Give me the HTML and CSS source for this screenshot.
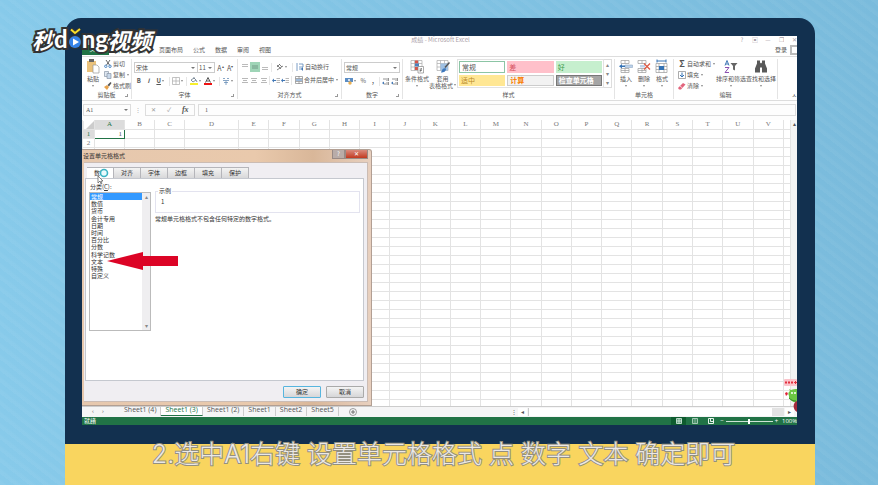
FILE: index.html
```html
<!DOCTYPE html>
<html lang="zh-CN">
<head>
  <meta charset="UTF-8">
  <meta name="viewport" content="width=device-width, initial-scale=1.0">
  <title>设置单元格格式</title>
  <link rel="stylesheet" href="styles.css">
</head>
<body>
  <!-- 아이콘 -->
  <svg class="defs" width="0" height="0">
    <symbol id="i-paste" viewBox="0 0 14 15"><rect x="1" y="2" width="9" height="11" fill="#eac27c"/><rect x="3" y="0" width="5" height="3" fill="#666"/><path d="M7 6h4l2 2v6H7z" fill="#fff" stroke="#999" stroke-width=".7"/></symbol>
    <symbol id="i-cut" viewBox="0 0 8 8"><path d="M2 0l3.500 5M6 0L2.500 5" stroke="#666" fill="none"/><circle cx="1.800" cy="6.300" r="1.200" fill="none" stroke="#4a84c0"/><circle cx="6" cy="6.300" r="1.200" fill="none" stroke="#4a84c0"/></symbol>
    <symbol id="i-copy" viewBox="0 0 8 8"><path d="M.5.5h4v5h-4z" fill="#dde6f0" stroke="#8a97a8" stroke-width=".7"/><path d="M3 2.500h4v5H3z" fill="#c8d8ea" stroke="#8a97a8" stroke-width=".7"/></symbol>
    <symbol id="i-brush" viewBox="0 0 8 8"><path d="M0 5l3-2 2 2-2 3z" fill="#e8a34d"/><path d="M3.500 3l3-3 1 1-2.500 3.500z" fill="#555"/></symbol>
    <symbol id="i-grid" viewBox="0 0 8 8"><path d="M.5.5h7v7h-7zM4 .5v7M.5 4h7" fill="none" stroke="#aaa" stroke-width=".7"/></symbol>
    <symbol id="i-fill" viewBox="0 0 8 8"><path d="M1 3l3-2 2 2-3 2zM4 0v2M6 3l1 2" fill="#fff" stroke="#678" stroke-width=".8"/><rect y="6" width="8" height="2" fill="#f7ef2c"/></symbol>
    <symbol id="i-color" viewBox="0 0 8 8"><path d="M1.500 5.500L4 .5l2.500 5M2.500 4h3" fill="none" stroke="#555"/><rect y="6" width="8" height="2" fill="#e11"/></symbol>
    <symbol id="i-pinyin" viewBox="0 0 8 8"><path d="M1 1.500h2M5 1.500h2M1 3.500h6M2 5.500h4M4 4v4" fill="none" stroke="#6a8fb8" stroke-width=".8"/></symbol>
    <symbol id="i-top" viewBox="0 0 8 8"><path d="M1 1.500h6M1 3.500h6" stroke="#aaa" stroke-width=".8"/></symbol>
    <symbol id="i-mid" viewBox="0 0 8 8"><path d="M1 3h6M1 5h6" stroke="#678e7b" stroke-width=".8"/></symbol>
    <symbol id="i-bot" viewBox="0 0 8 8"><path d="M1 4.500h6M1 6.500h6" stroke="#aaa" stroke-width=".8"/></symbol>
    <symbol id="i-lines" viewBox="0 0 8 8"><path d="M1 2.500h6M2 4.500h4M1 6.500h6" stroke="#999" stroke-width=".7"/></symbol>
    <symbol id="i-orient" viewBox="0 0 8 8"><path d="M1 7l6-4M1 2l4 4M3 1l3 3M1 4l3-3" fill="none" stroke="#666" stroke-width=".8"/></symbol>
    <symbol id="i-indent" viewBox="0 0 8 8"><path d="M4.500 2.500H8M4.500 4.500H8M4.500 6.500H8" stroke="#999" stroke-width=".7"/><path d="M0 4.500l2-2v1.500h2v1H2v1.500z" fill="#3f76b5"/></symbol>
    <symbol id="i-wrap" viewBox="0 0 8 8"><path d="M1 0v8M3 1h4v3H3M3 6h3" fill="none" stroke="#5c87b8" stroke-width=".8"/><path d="M5 6l2-2v4z" fill="#3f76b5"/></symbol>
    <symbol id="i-merge" viewBox="0 0 8 8"><path d="M.5.5h7v7h-7zM.5 2.500h7M.5 5.500h7M4 0v2.500M4 5.500V8" fill="none" stroke="#888" stroke-width=".7"/><path d="M1 4h6" stroke="#3f76b5"/></symbol>
    <symbol id="i-money" viewBox="0 0 8 8"><rect y="1" width="8" height="4" fill="#5b8dc4"/><circle cx="4" cy="3" r="1" fill="#fff"/><circle cx="5" cy="6" r="1.700" fill="#e9ae52"/></symbol>
    <symbol id="i-dec" viewBox="0 0 8 8"><path d="M1 2h3M5 1v3M6.500 1v3M2 7h2M5 5v3M6.500 5v3" stroke="#777" stroke-width=".8"/><path d="M0 6l2-1.500v3z" fill="#3f76b5"/></symbol>
    <symbol id="i-cond" viewBox="0 0 14 14"><path d="M1 1h11v10H1zM4.500 1v10M8.500 1v10M1 4h11M1 7.500h11" fill="#fff" stroke="#aaa" stroke-width=".7"/><path d="M5 1h3v3H5z" fill="#d65348"/><path d="M5 4h4v3H5z" fill="#4a80bd"/><path d="M5 7.500h3v3H5z" fill="#d65348"/><path d="M8 7h5.500v6.500H8z" fill="#fff" stroke="#888" stroke-width=".7"/><path d="M9.500 9.500h2.500M9.500 11h2.500M11.500 8.500l-1.500 4" stroke="#555" stroke-width=".6"/></symbol>
    <symbol id="i-table" viewBox="0 0 14 14"><path d="M1 1h11v10H1zM4.500 1v10M8.500 1v10M1 4h11M1 7.500h11" fill="#fff" stroke="#aaa" stroke-width=".7"/><path d="M4.500 4h7.500v7H4.500z" fill="#9fc0e2"/><path d="M13.500 3L9 8" stroke="#555" stroke-width="1.500"/><path d="M5 13c1-4 3-5 5-4 0 3-2 4-5 4z" fill="#3d78bc"/></symbol>
    <symbol id="i-insert" viewBox="0 0 14 14"><path d="M2 1h8v3H2zM6 1v3M2 9h8v4H2zM6 9v4M2 11h8" fill="#fff" stroke="#999" stroke-width=".7"/><path d="M6 5.500h7.500v2.500H6z" fill="#bcd2ea" stroke="#8fa8c4" stroke-width=".6"/><path d="M0 6.800l3-2.300v1.600h3v1.400H3V9z" fill="#3472b4"/></symbol>
    <symbol id="i-delete" viewBox="0 0 14 14"><path d="M1 1h8v3H1zM5 1v3M1 9h8v4H1zM5 9v4M1 11h8" fill="#fff" stroke="#999" stroke-width=".7"/><path d="M3 5.500h5v2.500H3z" fill="#bcd2ea"/><path d="M7 4l6 6M13 4l-6 6" stroke="#dd5a44" stroke-width="1.300"/></symbol>
    <symbol id="i-format" viewBox="0 0 14 14"><path d="M2 1.500h9M2 0v3M11 0v3" stroke="#3472b4"/><path d="M1 4h11v9H1zM4 4v9M9 4v9M1 7h11M1 10h11" fill="#fff" stroke="#999" stroke-width=".7"/><path d="M4 6.500h5v4H4z" fill="#3472b4"/></symbol>
    <symbol id="i-down" viewBox="0 0 8 8"><path d="M.5.5h7v7h-7z" fill="#fff" stroke="#888" stroke-width=".7"/><path d="M4 1.500v4M2 4l2 2 2-2" fill="none" stroke="#3472b4"/></symbol>
    <symbol id="i-erase" viewBox="0 0 8 8"><path d="M0 6l5-5 2.500 1.500L3 7.500H1z" fill="#e2647c"/><path d="M2 4l2.500 2" stroke="#fff" stroke-width=".7"/></symbol>
    <symbol id="i-filter" viewBox="0 0 14 14"><path d="M1 6l2-5 2 5M1.700 4.500h2.600" fill="none" stroke="#3f76b5"/><path d="M1 8h4l-4 5h4" fill="none" stroke="#8a4fb0"/><path d="M6.500 3.500h7L11 6.500V11l-2-1V6.500z" fill="#666"/></symbol>
    <symbol id="i-find" viewBox="0 0 14 14"><path d="M3 1h3v2l1 1 1-1V1h3v3l2 5v4H8V8H6v5H1V9l2-5z" fill="#595959"/></symbol>
  </svg>

  <main class="stage">
    <div class="monitor">
      <div class="excel">
        <header class="titlebar">
          <span class="doc-title">成绩 - Microsoft Excel</span>
          <div class="win-btns">
            <span>?</span><span>▣</span><span>—</span><span>❐</span><span>✕</span>
          </div>
        </header>

        <nav class="menu">
          <a href="#" class="file">文件</a>
          <a href="#" class="on">开始</a>
          <a href="#">插入</a>
          <a href="#">页面布局</a>
          <a href="#">公式</a>
          <a href="#">数据</a>
          <a href="#">审阅</a>
          <a href="#">视图</a>
          <a href="#" class="login">登录</a>
          <span class="avatar"></span>
        </nav>

        <div class="ribbon">
          <section class="group">
            <div class="group-body">
              <button class="big"><svg><use href="#i-paste"/></svg>粘贴<i class="caret"></i></button>
              <div class="stack">
                <button><svg><use href="#i-cut"/></svg>剪切</button>
                <button><svg><use href="#i-copy"/></svg>复制<i class="caret"></i></button>
                <button><svg><use href="#i-brush"/></svg>格式刷</button>
              </div>
            </div>
            <footer>剪贴板<i class="corner"></i></footer>
          </section>

          <section class="group">
            <div class="group-body rows">
              <div class="row">
                <select class="font-name" aria-label="字体"><option>宋体</option></select>
                <select class="font-size" aria-label="字号"><option>11</option></select>
                <button class="tool letter">A<sup>▴</sup></button>
                <button class="tool letter">A<sup>▾</sup></button>
              </div>
              <div class="row">
                <button class="tool"><b>B</b></button>
                <button class="tool"><b><em>I</em></b></button>
                <button class="tool wide"><b><u>U</u></b><i class="caret"></i></button>
                <i class="sep"></i>
                <button class="tool wide"><svg><use href="#i-grid"/></svg><i class="caret"></i></button>
                <i class="sep"></i>
                <button class="tool wide"><svg><use href="#i-fill"/></svg><i class="caret"></i></button>
                <button class="tool wide"><svg><use href="#i-color"/></svg><i class="caret"></i></button>
                <i class="sep"></i>
                <button class="tool wide"><svg><use href="#i-pinyin"/></svg><i class="caret"></i></button>
              </div>
            </div>
            <footer>字体<i class="corner"></i></footer>
          </section>

          <section class="group">
            <div class="group-body rows">
              <div class="row">
                <button class="tool"><svg><use href="#i-top"/></svg></button>
                <button class="tool pressed"><svg><use href="#i-mid"/></svg></button>
                <button class="tool"><svg><use href="#i-bot"/></svg></button>
                <i class="sep"></i>
                <button class="tool orient"><svg><use href="#i-orient"/></svg><i class="caret"></i></button>
                <i class="sep"></i>
                <button class="tool text"><svg><use href="#i-wrap"/></svg>自动换行</button>
              </div>
              <div class="row">
                <button class="tool"><svg><use href="#i-lines"/></svg></button>
                <button class="tool"><svg><use href="#i-lines"/></svg></button>
                <button class="tool"><svg><use href="#i-lines"/></svg></button>
                <i class="sep"></i>
                <button class="tool"><svg><use href="#i-indent"/></svg></button>
                <button class="tool"><svg><use href="#i-indent"/></svg></button>
                <i class="sep"></i>
                <button class="tool text"><svg><use href="#i-merge"/></svg>合并后居中<i class="caret"></i></button>
              </div>
            </div>
            <footer>对齐方式<i class="corner"></i></footer>
          </section>

          <section class="group">
            <div class="group-body rows">
              <div class="row">
                <select class="num-format" aria-label="数字格式"><option>常规</option></select>
              </div>
              <div class="row">
                <button class="tool wide"><svg><use href="#i-money"/></svg><i class="caret"></i></button>
                <button class="tool">%</button>
                <button class="tool"><b>,</b></button>
                <i class="sep"></i>
                <button class="tool"><svg><use href="#i-dec"/></svg></button>
                <button class="tool"><svg><use href="#i-dec"/></svg></button>
              </div>
            </div>
            <footer>数字<i class="corner"></i></footer>
          </section>

          <section class="group">
            <div class="group-body">
              <button class="big"><svg><use href="#i-cond"/></svg>条件格式<i class="caret"></i></button>
              <button class="big"><svg><use href="#i-table"/></svg>套用<span>表格格式<i class="caret"></i></span></button>
              <div class="gallery">
                <button class="s-normal">常规</button>
                <button class="s-bad">差</button>
                <button class="s-good">好</button>
                <button class="s-mid">适中</button>
                <button class="s-calc">计算</button>
                <button class="s-check">检查单元格</button>
              </div>
              <div class="gallery-nav"><span>▴</span><span>▾</span><span>▾</span></div>
            </div>
            <footer>样式</footer>
          </section>

          <section class="group">
            <div class="group-body even">
              <button class="big"><svg><use href="#i-insert"/></svg>插入<i class="caret"></i></button>
              <button class="big"><svg><use href="#i-delete"/></svg>删除<i class="caret"></i></button>
              <button class="big"><svg><use href="#i-format"/></svg>格式<i class="caret"></i></button>
            </div>
            <footer>单元格</footer>
          </section>

          <section class="group">
            <div class="group-body">
              <div class="stack edit">
                <button><b class="sigma">Σ</b>自动求和<i class="caret"></i></button>
                <button><svg><use href="#i-down"/></svg>填充<i class="caret"></i></button>
                <button><svg><use href="#i-erase"/></svg>清除<i class="caret"></i></button>
              </div>
              <button class="big"><svg><use href="#i-filter"/></svg>排序和筛选<i class="caret"></i></button>
              <button class="big"><svg><use href="#i-find"/></svg>查找和选择<i class="caret"></i></button>
            </div>
            <footer>编辑</footer>
          </section>
          <div class="collapse">ㅅ</div>
        </div>

        <div class="formula">
          <select class="name-box" aria-label="名称框"><option>A1</option></select>
          <span class="dots">⋮</span>
          <div class="fx"><span>✕</span><span>✓</span><em>fx</em></div>
          <input type="text" value="1" aria-label="编辑栏">
        </div>

        <div class="sheet">
          <table id="grid">
            <colgroup>
              <col class="c-head"><col class="c-a"><col class="c-a"><col class="c-a"><col class="c-d">
              <col span="18"><col class="c-last">
            </colgroup>
          </table>
          <div class="vscroll"><span>▴</span></div>
        </div>

        <div class="sheet-tabs">
          <span class="arrows">‹</span><span class="arrows">›</span>
          <a href="#">Sheet1 (4)</a>
          <a href="#" class="on">Sheet1 (3)</a>
          <a href="#">Sheet1 (2)</a>
          <a href="#">Sheet1</a>
          <a href="#">Sheet2</a>
          <a href="#">Sheet5</a>
          <button class="add" aria-label="新工作表"><svg viewBox="0 0 8 8"><circle cx="4" cy="4" r="3.500" fill="none" stroke="#777" stroke-width=".7"/><path d="M4 2v4M2 4h4" stroke="#555" stroke-width=".8"/></svg></button>
          <div class="hscroll"><span>⋮</span><span class="end">◂</span><i></i><span class="end">▸</span></div>
        </div>

        <div class="status">
          <span>就绪</span>
          <div class="views">
            <svg class="sel" viewBox="0 0 14 8"><path d="M5 1.500h5v5H5zM7.500 1.500v5M5 4h5" fill="#5b9a78" stroke="#dbeee3" stroke-width=".8"/></svg>
            <svg viewBox="0 0 14 8"><path d="M5 1.500h5v5H5zM6 3h3M6 5h3" fill="none" stroke="#c5dfd0" stroke-width=".8"/></svg>
            <svg viewBox="0 0 14 8"><path d="M5 1.500h5v5H5zM7 1.500v3h3" fill="none" stroke="#fff" stroke-width=".9"/></svg>
          </div>
          <span>−</span>
          <input type="range" min="10" max="190" value="100" aria-label="缩放">
          <span>+</span>
          <span class="pct">100%</span>
        </div>

        <!-- 셀 서식 창 -->
        <div class="dialog">
          <div class="dlg-title">
            <span>设置单元格格式</span>
            <button class="help">?</button><button class="close">✕</button>
          </div>
          <div class="dlg-body">
            <div class="dlg-tabs">
              <button class="on">数字</button><button>对齐</button><button>字体</button><button>边框</button><button>填充</button><button>保护</button>
            </div>
            <div class="panel">
              <div class="kinds">
                <label for="kind">分类(<u>C</u>):</label>
                <div class="listbox">
                  <select id="kind" size="12">
                    <option selected>常规</option>
                    <option>数值</option>
                    <option>货币</option>
                    <option>会计专用</option>
                    <option>日期</option>
                    <option>时间</option>
                    <option>百分比</option>
                    <option>分数</option>
                    <option>科学记数</option>
                    <option>文本</option>
                    <option>特殊</option>
                    <option>自定义</option>
                  </select>
                  <div class="bar"><span>▴</span><span>▾</span></div>
                </div>
              </div>
              <div class="detail">
                <fieldset><legend>示例</legend>1</fieldset>
                <p>常规单元格格式不包含任何特定的数字格式。</p>
              </div>
            </div>
            <div class="dlg-btns">
              <button class="ok">确定</button>
              <button>取消</button>
            </div>
          </div>
          <svg class="cursor" viewBox="0 0 14 17"><circle cx="9" cy="5" r="3.500" fill="#e9fbfd" stroke="#3bb4c4" stroke-width="1.600"/><path d="M3 8v7l2-2 1 3 1-.5-1-2.500h2z" fill="#fff" stroke="#555" stroke-width=".7"/></svg>
          <svg class="arrow" viewBox="0 0 71 18"><path d="M0 9L36 0v4h35v10H36v4z" fill="#dc0426"/></svg>
        </div>

        <svg class="mascot" viewBox="0 0 13 36"><rect x="0" y="1" width="13" height="7" rx="1" fill="#fbc4cb"/><path d="M1 4.500h2M4 4.500h2M7 4.500h2M10 4.500h3M2 3v3M5 3v3M8 3v3M11.500 3v3" stroke="#e0303f"/><path d="M5 18c-1-2-1-4 1-5l-1-2 2 1c2-1 4-1 6-1v13c-3 1-6-1-8-4z" fill="#6cc644"/><path d="M1 15l2-1 1 2-2 2z" fill="#e0233a"/><circle cx="8" cy="15" r="1" fill="#fff"/><circle cx="11" cy="15" r="1" fill="#fff"/><path d="M5 20c2 2 4 3 7 3" stroke="#388e2a" fill="none"/><path d="M13 23c-4 1-5 8 0 11z" fill="#a32a3c"/></svg>
      </div>
    </div>
    <p class="caption">2.选中A1右键 设置单元格格式 点 数字 文本 确定即可</p>
  </main>

  <div class="logo">
    <span class="cn">秒</span><span class="en">d</span><svg viewBox="0 0 14 24"><path d="M3 2l4 4 5-4" fill="none" stroke="#333" stroke-width="4"/><circle cx="7" cy="15" r="7" fill="#333"/><path d="M3 2.500l4 3.500 5-4" fill="none" stroke="#f9df2c" stroke-width="2"/><circle cx="7" cy="15" r="6" fill="#3583e8"/><path d="M5 11.500v7l6-3.500z" fill="#fff"/></svg><span class="en">ng</span><span class="cn">视频</span>
  </div>

  <script>
    const grid = document.querySelector("#grid");
    const cols = "ABCDEFGHIJKLMNOPQRSTUV";
    let html = "<thead><tr><th class='all'></th>";
    for(const c of cols){
      html += "<th>" + c + "</th>";
    }
    html += "<th></th></tr></thead><tbody>";
    for(let r = 1; r <= 31; r++){
      html += "<tr><th>" + r + "</th>" + "<td></td>".repeat(cols.length + 1) + "</tr>";
    }
    grid.insertAdjacentHTML("beforeend", html + "</tbody>");
    // A1 선택
    const a1 = grid.querySelector("tbody td");
    a1.textContent = "1";
    a1.className = "active";
    grid.querySelectorAll("thead th")[1].className = "sel";
    grid.querySelector("tbody th").className = "sel";
  </script>
</body>
</html>
```
FILE: styles.css
```css
*{
  box-sizing: border-box;
}
body{
  margin: 0;
  min-height: 100vh;
  font-family: "Noto Sans CJK SC", sans-serif;
  font-size: 6px;
  line-height: 8px;
  color: #555;
  background: repeating-linear-gradient(38deg, rgba(255,255,255,.04) 0 3px, transparent 5px 9px),
  linear-gradient(90deg, #87caea, #7abbdc);
  overflow: hidden;
}
a{
  color: inherit;
  text-decoration: none;
}
button, select, input{
  font: inherit;
  color: inherit;
  margin: 0;
  padding: 0;
  border: 0;
  border-radius: 0;
  background: none;
}
select{
  appearance: none;
}
.defs{
  position: absolute;
}
.stage{
  display: flex;
  flex-direction: column;
  min-height: 100vh;
  padding: 18px 63px 0 65px;
}
.monitor{
  padding: 18px 18px 19px 17px;
  background: #12304f;
  border-radius: 16px 16px 0 0;
}
.excel{
  position: relative;
  background: #fff;
  overflow: hidden;
}

/* 제목, 메뉴 */
.titlebar{
  display: flex;
  justify-content: flex-end;
  color: #aaa0a8;
}
.doc-title{
  flex: 1;
  text-align: center;
  padding-left: 60px;
}
.win-btns{
  display: flex;
  gap: 7px;
}
.win-btns span{
  width: 6px;
  text-align: center;
  overflow: hidden;
}
.menu{
  display: flex;
  align-items: center;
  gap: 10px;
  height: 12px;
}
.menu .file{
  width: 27px;
  height: 10px;
  margin-right: -4px;
  text-align: center;
  color: #fff;
  background: #217346;
}
.menu .on{
  color: #217346;
}
.menu .login{
  margin-left: auto;
}
.avatar{
  width: 7px;
  height: 10px;
  margin-left: -7px;
  border: 2px solid #bbb;
  border-right: 0;
}

/* 리본 */
.ribbon{
  display: grid;
  grid-template-columns: 50fr 106fr 104fr 61fr 212fr 59fr 104fr 19fr;
  padding: 2px 0 1px;
  border-top: 1px solid #ddd;
  border-bottom: 1px solid #ddd;
}
.group{
  display: flex;
  flex-direction: column;
  min-width: 0;
  border-right: 1px solid #e4e4e4;
}
.group-body{
  display: flex;
  height: 32px;
  padding: 0 2px;
}
.group footer{
  display: flex;
  justify-content: center;
  position: relative;
}
.corner{
  position: absolute;
  right: 3px;
  bottom: 2px;
  width: 3px;
  height: 3px;
  border: solid #999;
  border-width: 0 1px 1px 0;
}
.caret{
  display: inline-block;
  flex: none;
  margin: 0 1px;
  border: solid transparent;
  border-width: 2px 1px 0;
  border-top-color: #888;
}
button{
  white-space: nowrap;
}
.ribbon button{
  display: flex;
  align-items: center;
  justify-content: center;
}
.ribbon .big{
  flex: none;
  flex-direction: column;
  justify-content: flex-start;
  min-width: 18px;
  line-height: 7px;
}
.big svg{
  width: 14px;
  height: 15px;
  margin-bottom: 1px;
}
.big .caret{
  margin-top: 3px;
}
.big span .caret{
  margin: 2px 0 2px 1px;
}
.stack{
  display: flex;
  flex-direction: column;
  justify-content: space-between;
  margin-left: 2px;
}
.stack button{
  gap: 1px;
  justify-content: flex-start;
  line-height: 10px;
}
.stack svg, .tool svg{
  flex: none;
  width: 8px;
  height: 8px;
}
.stack.edit{
  width: 38px;
}
.sigma{
  width: 8px;
  font-size: 9px;
}
.rows{
  flex-direction: column;
  gap: 3px;
  padding-top: 3px;
}
.row{
  display: flex;
  align-items: center;
}
.row select, .name-box{
  height: 11px;
  padding-left: 1px;
  border: 1px solid #ccc;
  background: url("data:image/svg+xml,%3Csvg xmlns='http://www.w3.org/2000/svg' width='4' height='2'%3E%3Cpath d='M0 0h4L2 2z' fill='%23777'/%3E%3C/svg%3E") no-repeat right 2px center;
}
.row .font-name{
  width: 66px;
}
.row .font-size{
  width: 17px;
  border-left: 0;
  margin-right: 1px;
}
.row .num-format{
  flex: 1;
}
.tool{
  width: 10px;
  height: 10px;
}
.tool.wide{
  width: 15px;
}
.tool.orient{
  width: 18px;
}
.tool.text{
  width: auto;
  margin-left: 2px;
  gap: 1px;
}
.tool.letter{
  font-size: 7px;
}
.tool sup{
  align-self: flex-start;
  font-size: 4px;
  line-height: 6px;
}
.tool.pressed{
  background: #9fd5b7;
}
.sep{
  width: 1px;
  height: 9px;
  margin: 0 1px;
  background: #e6e6e6;
}
.gallery{
  flex: 1;
  display: grid;
  grid-template-columns: repeat(3, 1fr);
  gap: 2px;
  margin-left: 1px;
  padding: 1px;
  border: 1px solid #e2e2e2;
  height: 29px;
}
.gallery button{
  justify-content: flex-start;
  padding-left: 2px;
  font-size: 7px;
  min-width: 0;
}
.gallery .s-normal{
  border: 1px solid #8cc5a5;
}
.gallery .s-bad{
  color: #d5505f;
  background: #ffc0ca;
}
.gallery .s-good{
  color: #3c9a4c;
  background: #c6efce;
}
.gallery .s-mid{
  color: #b98a2a;
  background: #ffe794;
}
.gallery .s-calc{
  color: #fa7d00;
  font-weight: bold;
  background: #f2f2f2;
  border: 1px solid #ccc;
}
.gallery .s-check{
  color: #fff;
  font-weight: bold;
  background: #a5a5a5;
  border: 1px solid #777;
}
.gallery-nav{
  display: flex;
  flex-direction: column;
  justify-content: space-around;
  width: 8px;
  height: 29px;
  text-align: center;
  color: #888;
  border: 1px solid #ddd;
  border-left: 0;
}
.even{
  justify-content: space-around;
}
.collapse{
  align-self: end;
  text-align: right;
}

/* 수식 입력줄 */
.formula{
  display: flex;
  align-items: stretch;
  height: 19px;
  padding: 3px 1px 4px;
  font-family: "Liberation Serif", "Noto Sans CJK SC", serif;
  background: #fdfdfd;
}
.name-box{
  width: 48px;
  height: auto;
  padding-left: 2px;
  border-color: #ddd;
}
.dots{
  width: 14px;
  text-align: center;
  line-height: 12px;
  color: #aaa;
}
.fx{
  display: flex;
  justify-content: space-around;
  align-items: center;
  width: 50px;
  margin-right: 3px;
  color: #999;
  border: 1px solid #ddd;
}
.fx em{
  font-size: 8px;
  font-weight: bold;
  color: #555;
}
.formula input{
  flex: 1;
  min-width: 0;
  padding-left: 6px;
  border: 1px solid #ddd;
}

/* 시트 */
.sheet{
  display: flex;
  height: 286px;
  overflow: hidden;
}
#grid{
  flex: 1;
  table-layout: fixed;
  width: 0;
  border-collapse: collapse;
  font-family: "Liberation Serif", serif;
}
.c-head{
  width: 12px;
}
.c-a{
  width: 30px;
}
.c-d{
  width: 54px;
}
.c-last{
  width: 7px;
}
#grid th, #grid td{
  height: 9px;
  padding: 0;
  font-size: 7px;
  line-height: 8px;
  font-weight: normal;
  border: 1px solid #e3e3e3;
}
#grid th{
  color: #777;
  border-top: 0;
}
#grid td{
  text-align: right;
}
#grid th.all{
  background: linear-gradient(135deg, transparent 60%, #ccc 60%);
}
#grid th.sel{
  color: #217346;
  background: #dcdcdc;
}
#grid td.active{
  padding-right: 2px;
  border: 1px solid #217346;
}
.vscroll{
  width: 6px;
  text-align: center;
  background: #f3f3f3;
}
.sheet-tabs{
  display: flex;
  align-items: flex-start;
  height: 11px;
  font-family: "Open Sans", sans-serif;
  background: #f5f5f6;
  border-top: 1px solid #ccc;
}
.arrows{
  width: 10px;
  text-align: center;
}
.arrows:first-child{
  margin-left: 6px;
}
.arrows + a{
  margin-left: 12px;
}
.sheet-tabs a{
  height: 9px;
  padding: 0 4px;
  font-size: 7px;
  line-height: 6px;
  border-right: 1px solid #ccc;
}
.sheet-tabs .on{
  color: #217346;
  background: #fff;
  border-bottom: 1px solid #217346;
}
.add{
  display: flex;
  margin-left: 10px;
  padding-top: 1px;
}
.add svg{
  width: 8px;
  height: 8px;
}
.hscroll{
  display: flex;
  width: 285px;
  margin-left: auto;
  margin-right: 3px;
  padding-top: 1px;
}
.hscroll span{
  width: 9px;
  text-align: center;
}
.hscroll .end{
  background: #fff;
}
.hscroll i{
  flex: 1;
  margin: 0 1px;
  background: #fff;
  border: solid #ccc;
  border-width: 0 12px 0 1px;
  border-right-color: #e3e3e3;
}
.status{
  display: flex;
  align-items: center;
  height: 8px;
  padding-left: 2px;
  color: #fff;
  background: #217346;
}
.views{
  display: flex;
  gap: 1px;
  margin-left: auto;
  margin-right: 2px;
}
.views svg{
  width: 15px;
  height: 8px;
}
.views .sel{
  background: #0e5c2f;
}
.status input{
  appearance: none;
  width: 47px;
  height: 1px;
  margin: 0 2px;
  background: #cfe3d7;
}
.status input::-webkit-slider-thumb{
  appearance: none;
  width: 2px;
  height: 5px;
  background: #fff;
}
.pct{
  width: 15px;
  margin-left: 4px;
  font-family: "Open Sans", sans-serif;
}

/* 셀 서식 창 */
.dialog{
  position: absolute;
  left: 0;
  top: 113px;
  width: 290px;
  padding: 0 3px 3px 2px;
  color: #333;
  background: linear-gradient(90deg, #e6c8ae, #e9c9ac 60%, #d9b799 80%, #e8d0bf);
  border: 1px solid #b29f93;
  border-left: 0;
  border-radius: 0 3px 0 0;
}
.dlg-title{
  display: flex;
  height: 12px;
  margin-left: -1px;
}
.dlg-title span{
  flex: 1;
  padding-top: 2px;
}
.dlg-title button{
  width: 13px;
  height: 9px;
  line-height: 8px;
  color: #fff;
  background: #b9aca8;
  border: 1px solid #998a85;
  border-top: 0;
}
.dlg-title .close{
  width: 23px;
  background: linear-gradient(#d98a7c, #c23a20);
}
.dlg-body{
  padding: 4px 3px 3px 1px;
  background: #f0eef2;
  border: 1px solid #cbbcb4;
  border-left: 0;
}
.dlg-tabs{
  display: flex;
  padding-left: 2px;
}
.dlg-tabs button{
  width: 27px;
  height: 11px;
  border: 1px solid #b5b5ba;
  border-left-width: 0;
  border-bottom: 0;
  background: linear-gradient(#f3f3f3, #d8d8da);
}
.dlg-tabs .on{
  background: #fff;
}
.panel{
  display: flex;
  gap: 4px;
  height: 203px;
  padding: 3px 3px 0;
  background: #fff;
  border: 1px solid #c5c8cf;
}
.kinds{
  width: 62px;
}
.kinds label{
  display: block;
  padding: 0 1px;
  line-height: 10px;
}
.listbox{
  display: flex;
  height: 139px;
  border: 1px solid #bbb;
}
.listbox select{
  flex: 1;
  height: 100%;
  min-width: 0;
  overflow: hidden;
  outline: 0;
}
.listbox option{
  display: flex;
  align-items: center;
  height: 1.2em;
  min-height: 0;
  padding: 0 1px;
}
.listbox option:checked{
  color: #fff;
  background: #3399ff linear-gradient(#3399ff, #3399ff);
}
.bar{
  display: flex;
  flex-direction: column;
  justify-content: space-between;
  width: 8px;
  text-align: center;
  color: #888;
  background: #efeef0;
}
.detail{
  flex: 1;
}
fieldset{
  margin: 5px 0 0;
  padding: 3px 5px 6px;
  border: 1px solid #e3e3ef;
}
legend{
  margin-left: -3px;
  padding: 0 1px;
}
.detail p{
  margin: 2px 0;
}
.dlg-btns{
  display: flex;
  justify-content: flex-end;
  gap: 5px;
  padding-top: 5px;
}
.dlg-btns button{
  width: 38px;
  height: 12px;
  background: linear-gradient(#f4f4f4, #d6d6d8);
  border: 1px solid #aaa;
  border-radius: 1px;
}
.dlg-btns .ok{
  border-color: #57b5de;
}
.cursor{
  position: absolute;
  left: 13px;
  top: 18px;
  width: 14px;
  height: 17px;
}
.arrow{
  position: absolute;
  left: 25px;
  top: 102px;
  width: 71px;
  height: 18px;
}
.mascot{
  position: absolute;
  right: 0;
  bottom: 11px;
  width: 13px;
  height: 36px;
}

/* 자막, 로고 */
.caption{
  flex: 1;
  margin: 0;
  padding-left: 7px;
  font-family: Inter, "Noto Sans CJK SC", sans-serif;
  font-size: 25px;
  font-weight: 300;
  line-height: 20px;
  text-align: center;
  white-space: nowrap;
  color: #ebe8e6;
  background: #f9d55f;
  -webkit-text-stroke: 2px #94907f;
  paint-order: stroke fill;
}
.logo{
  position: absolute;
  left: 32px;
  top: 23px;
  display: flex;
  align-items: center;
  height: 32px;
  font-size: 22px;
  line-height: 32px;
  font-weight: bold;
  font-style: italic;
  color: #fff;
  -webkit-text-stroke: 4px #333;
  paint-order: stroke fill;
}
.logo .en{
  font-family: Lato, sans-serif;
  font-size: 24px;
  font-style: normal;
}
.logo svg{
  width: 14px;
  height: 24px;
}
```
